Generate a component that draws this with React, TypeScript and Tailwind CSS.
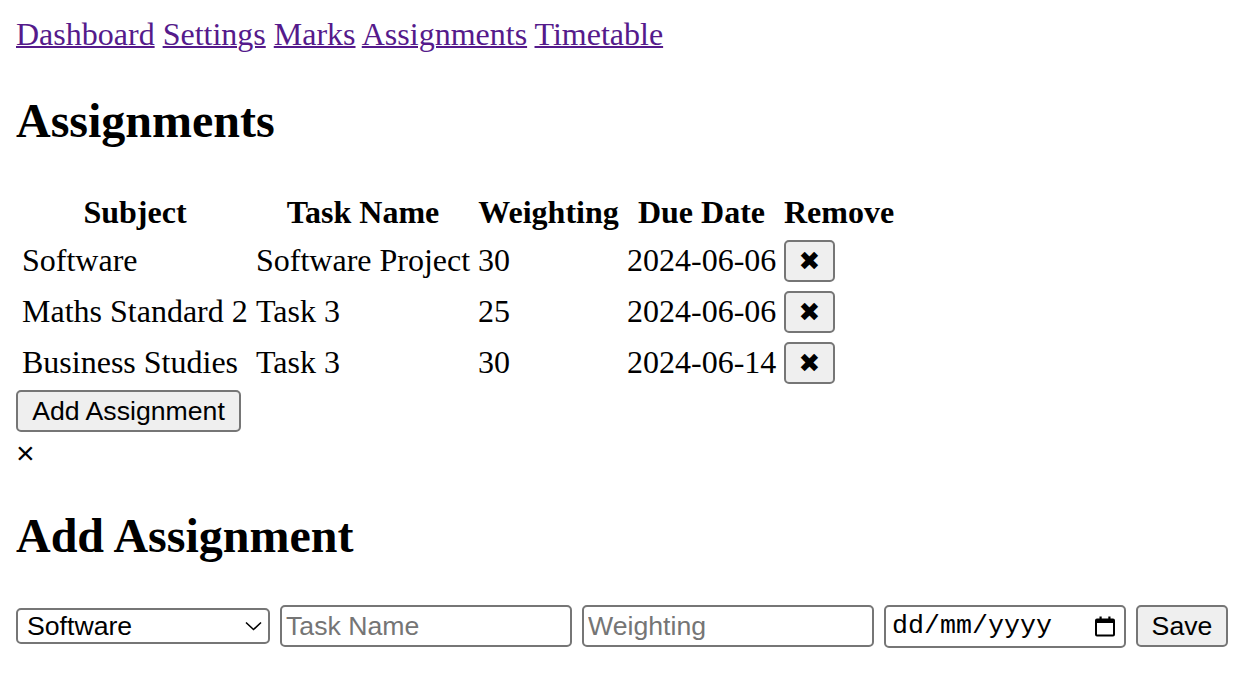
import React from "react";

const sans = "font-['Liberation_Sans',Arial,sans-serif]";

function XButton() {
  return (
    <button className="w-[51px] h-[42px] bg-[#efefef] border-2 border-[#767676] rounded-[5px] flex items-center justify-center font-['DejaVu_Sans',sans-serif] text-[26px] leading-none text-black">
      ✖
    </button>
  );
}

function CalendarIcon() {
  return (
    <svg width="22" height="21" viewBox="0 0 22 21" fill="none">
      <rect x="2" y="3.5" width="18" height="16" rx="1" stroke="black" strokeWidth="2" />
      <rect x="2" y="3" width="18" height="4" fill="black" />
      <rect x="5.5" y="0.5" width="2.2" height="3.5" fill="black" />
      <rect x="14.3" y="0.5" width="2.2" height="3.5" fill="black" />
    </svg>
  );
}

export default function App() {
  const rows = [
    { subject: "Software", task: "Software Project", weight: "30", due: "2024-06-06" },
    { subject: "Maths Standard 2", task: "Task 3", weight: "25", due: "2024-06-06" },
    { subject: "Business Studies", task: "Task 3", weight: "30", due: "2024-06-14" },
  ];
  return (
    <div className="min-h-screen bg-white text-black p-4 font-['Liberation_Serif','Times_New_Roman',serif] text-[32px] leading-[37px]">
      <div>
        <a href="#" className="text-[#551A8B] underline decoration-2">Dashboard</a>{" "}
        <a href="#" className="text-[#551A8B] underline decoration-2">Settings</a>{" "}
        <a href="#" className="text-[#551A8B] underline decoration-2">Marks</a>{" "}
        <a href="#" className="text-[#551A8B] underline decoration-2">Assignments</a>{" "}
        <a href="#" className="text-[#551A8B] underline decoration-2">Timetable</a>
      </div>
      <h1 className="text-[48px] font-bold leading-[55px] mt-[40px] mb-[40px]">Assignments</h1>
      <table className="table-fixed w-[884px] border-separate border-spacing-[4px] whitespace-nowrap">
        <thead>
          <tr>
            <th className="w-[230px] p-[2px] text-center font-bold">Subject</th>
            <th className="w-[218px] p-[2px] text-center font-bold">Task Name</th>
            <th className="w-[145px] p-[2px] text-center font-bold">Weighting</th>
            <th className="w-[153px] p-[2px] text-center font-bold">Due Date</th>
            <th className="w-[114px] p-[2px] text-center font-bold">Remove</th>
          </tr>
        </thead>
        <tbody>
          {rows.map((r, i) => (
            <tr key={i}>
              <td className="h-[47px] p-[2px] align-middle">{r.subject}</td>
              <td className="h-[47px] p-[2px] align-middle">{r.task}</td>
              <td className="h-[47px] p-[2px] align-middle">{r.weight}</td>
              <td className="h-[47px] p-[2px] align-middle">{r.due}</td>
              <td className="h-[47px] p-[2px] align-middle">
                <XButton />
              </td>
            </tr>
          ))}
        </tbody>
      </table>
      <button className={`${sans} block w-[225px] h-[42px] bg-[#efefef] border-2 border-[#767676] rounded-[5px] text-[26.67px] leading-none text-black`}>
        Add Assignment
      </button>
      <div className={`${sans} h-[36px] leading-[36px] pt-[3px] text-[32px]`}>×</div>
      <h1 className="text-[48px] font-bold leading-[55px] mt-[40px] mb-[42px]">Add Assignment</h1>
      <div className={`${sans} flex items-center gap-[10px] h-[42px] text-[26.67px]`}>
        <div className="w-[254px] h-[36px] border-2 border-[#767676] rounded-[5px] bg-white flex items-center justify-between pl-[9px] pr-[6px]">
          <span className="leading-none">Software</span>
          <svg width="17" height="10" viewBox="0 0 17 10" fill="none">
            <path d="M1 1.5 L8.5 8.5 L16 1.5" stroke="black" strokeWidth="1.6" />
          </svg>
        </div>
        <input
          className="w-[292px] h-[42px] border-2 border-[#767676] rounded-[5px] px-[4px] bg-white outline-none placeholder:text-[#757575]"
          placeholder="Task Name"
        />
        <input
          className="w-[292px] h-[42px] border-2 border-[#767676] rounded-[5px] px-[4px] bg-white outline-none placeholder:text-[#757575]"
          placeholder="Weighting"
        />
        <div className="w-[242px] h-[43px] border-2 border-[#767676] rounded-[5px] bg-white flex items-center pl-[6px] pr-[8px]">
          <span className="font-['Liberation_Mono','Courier_New',monospace] text-[26.67px] leading-none">dd/mm/yyyy</span>
          <span className="ml-auto flex items-center">
            <CalendarIcon />
          </span>
        </div>
        <button className="w-[92px] h-[42px] bg-[#efefef] border-2 border-[#767676] rounded-[5px] leading-none text-black">
          Save
        </button>
      </div>
    </div>
  );
}
